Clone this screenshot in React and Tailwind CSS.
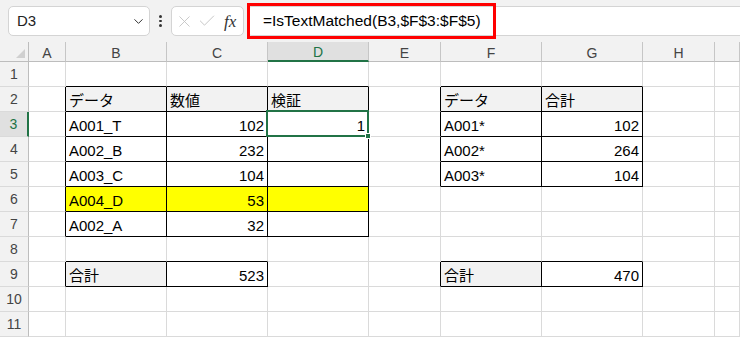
import { ChevronDown, X, Check } from 'lucide-react'

const COLS = ['A', 'B', 'C', 'D', 'E', 'F', 'G', 'H', 'I']
const ROWS = [1, 2, 3, 4, 5, 6, 7, 8, 9, 10, 11]

// cell content keyed "col+row"
const CELLS = {
  B2: { text: 'データ', head: true },
  C2: { text: '数値', head: true },
  D2: { text: '検証', head: true },
  B3: { text: 'A001_T' },
  C3: { text: '102', right: true },
  D3: { text: '1', right: true },
  B4: { text: 'A002_B' },
  C4: { text: '232', right: true },
  D4: { text: '' },
  B5: { text: 'A003_C' },
  C5: { text: '104', right: true },
  D5: { text: '' },
  B6: { text: 'A004_D', yellow: true },
  C6: { text: '53', right: true, yellow: true },
  D6: { text: '', yellow: true },
  B7: { text: 'A002_A' },
  C7: { text: '32', right: true },
  D7: { text: '' },
  B9: { text: '合計', head: true },
  C9: { text: '523', right: true },
  F2: { text: 'データ', head: true },
  G2: { text: '合計', head: true },
  F3: { text: 'A001*' },
  G3: { text: '102', right: true },
  F4: { text: 'A002*' },
  G4: { text: '264', right: true },
  F5: { text: 'A003*' },
  G5: { text: '104', right: true },
  F9: { text: '合計', head: true },
  G9: { text: '470', right: true },
}

const boxed = (c, r) => Boolean(CELLS[`${c}${r}`])

function Cell({ ci, r }) {
  const c = COLS[ci]
  const cell = CELLS[`${c}${r}`]
  const next = COLS[ci + 1]
  const rightBlack = boxed(c, r) || (next && boxed(next, r))
  const bottomBlack = boxed(c, r) || boxed(c, r + 1)
  const selected = c === 'D' && r === 3

  return (
    <div
      className={[
        'relative flex h-[25px] items-center overflow-visible border-b border-r px-[3px] text-[15px] leading-none text-black',
        rightBlack ? 'border-r-black' : 'border-r-[#dadada]',
        bottomBlack ? 'border-b-black' : 'border-b-[#dadada]',
        cell?.yellow ? 'bg-[#ffff00]' : cell?.head ? 'bg-[#f2f2f2]' : 'bg-white',
        cell?.right ? 'justify-end' : 'justify-start',
      ].join(' ')}
    >
      {cell?.text ? <span className="translate-y-[1px] whitespace-nowrap">{cell.text}</span> : null}
      {selected ? (
        <div className="absolute -left-[2px] -top-[2px] -right-[1px] -bottom-[1px] z-10 border-2 border-[#217346]">
          <div className="absolute -right-[4px] -bottom-[4px] h-[6px] w-[6px] border border-white bg-[#217346]" />
        </div>
      ) : null}
    </div>
  )
}

function FormulaBar() {
  return (
    <div className="relative flex h-[42px] items-start bg-[#f2f2f2] pl-[8px] pt-[6px]">
      <div className="flex h-[30px] w-[142px] items-center justify-between rounded-[5px] border border-[#d4d4d4] bg-white pl-[8px] pr-[3px]">
        <span className="text-[15px] text-[#222]">D3</span>
        <ChevronDown size={15} strokeWidth={1.6} className="text-[#333]" />
      </div>
      <div className="flex h-[30px] w-[21px] flex-col items-center justify-center gap-[2px]">
        <span className="h-[2.5px] w-[2.5px] rounded-full bg-[#333]" />
        <span className="h-[2.5px] w-[2.5px] rounded-full bg-[#333]" />
        <span className="h-[2.5px] w-[2.5px] rounded-full bg-[#333]" />
      </div>
      <div className="flex h-[30px] w-[73px] items-center rounded-[5px] border border-[#d4d4d4] bg-white pl-[3px]">
        <X size={19} strokeWidth={1.1} className="text-[#c2c2c2]" />
        <Check size={20} strokeWidth={1.1} className="ml-[3px] text-[#c2c2c2]" />
        <span className="ml-[7px] font-['Liberation_Serif',serif] text-[17px] italic leading-none text-[#333]">fx</span>
      </div>
      <div className="ml-[3px] flex h-[30px] flex-1 items-center rounded-l-[5px] border border-r-0 border-[#d4d4d4] bg-white pl-[15px]">
        <span className="text-[15.5px] text-black">=IsTextMatched(B3,$F$3:$F$5)</span>
      </div>
      <div className="absolute left-[247px] top-[3px] h-[36px] w-[249px] border-[3px] border-[#ff0000]" />
    </div>
  )
}

export default function App() {
  return (
    <div className="h-[340px] w-[740px] overflow-hidden bg-white font-['Liberation_Sans','Noto_Sans_CJK_JP',sans-serif]">
      <FormulaBar />
      <div className="grid grid-cols-[29px_37px_101px_101px_101px_72px_101px_101px_72px_1fr] bg-[#f2f2f2]">
        {/* corner */}
        <div className="relative h-[20px] border-b border-r border-[#bdbdbd]">
          <div className="absolute bottom-[3px] right-[3px] h-0 w-0 border-b-[9px] border-l-[9px] border-b-[#d0d0d0] border-l-transparent" />
        </div>
        {COLS.map((c) => (
          <div
            key={c}
            className={[
              'flex h-[20px] items-end justify-center pb-[1px] text-[14px] leading-none',
              c === 'D'
                ? 'border-b-2 border-r border-b-[#217346] border-r-[#c6c6c6] bg-[#e0e0e0] text-[#217346]'
                : 'border-b border-r border-b-[#bdbdbd] border-r-[#c6c6c6] text-[#444]',
            ].join(' ')}
          >
            {c === 'I' ? '' : c}
          </div>
        ))}
        {ROWS.map((r) => (
          <div key={r} className="contents">
            <div
              className={[
                'flex h-[25px] items-center justify-center border-b border-b-[#dadada] text-[14px] leading-none',
                r === 3
                  ? 'border-r-2 border-r-[#217346] bg-[#e0e0e0] text-[#217346]'
                  : 'border-r border-r-[#bdbdbd] text-[#444]',
              ].join(' ')}
            >
              {r}
            </div>
            {COLS.map((c, ci) => (
              <Cell key={c} ci={ci} r={r} />
            ))}
          </div>
        ))}
      </div>
    </div>
  )
}
